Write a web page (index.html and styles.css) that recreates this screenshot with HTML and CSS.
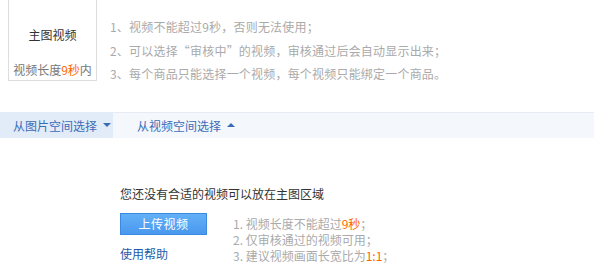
FILE: index.html
```html
<!DOCTYPE html>
<html lang="zh">
<head>
<meta charset="utf-8">
<link rel="stylesheet" href="styles.css">
</head>
<body>
<div class="top">
  <div class="cover">
    <div class="cover-title">主图视频</div>
    <div class="cover-note">视频长度<span class="hl">9秒</span>内</div>
  </div>
  <ul class="rules">
    <li>1、视频不能超过9秒，否则无法使用；</li>
    <li>2、可以选择“审核中”的视频，审核通过后会自动显示出来；</li>
    <li>3、每个商品只能选择一个视频，每个视频只能绑定一个商品。</li>
  </ul>
</div>
<div class="tabs">
  <div class="tab active">从图片空间选择<span class="caret down"></span></div>
  <div class="tab">从视频空间选择<span class="caret up"></span></div>
</div>
<div class="empty">
  <div class="empty-title">您还没有合适的视频可以放在主图区域</div>
  <div class="empty-row">
    <div class="actions">
      <button class="upload">上传视频</button>
      <a class="help">使用帮助</a>
    </div>
    <ol class="tips">
      <li>1. 视频长度不能超过<span class="hl">9秒</span>；</li>
      <li>2. 仅审核通过的视频可用；</li>
      <li>3. 建议视频画面长宽比为<span class="hl">1:1</span>；</li>
    </ol>
  </div>
</div>
</body>
</html>
```
FILE: styles.css
```css
* { box-sizing: border-box; }
html, body { margin: 0; padding: 0; background: #fff; }
body {
  font-family: "Noto Sans CJK SC", "Noto Sans", sans-serif;
  font-size: 12px;
  color: #333;
  width: 594px;
  height: 274px;
  overflow: hidden;
}
.hl { color: #f60; }
.top { display: flex; align-items: flex-start; }
.cover {
  margin-left: 8px;
  margin-top: -1px;
  width: 89px;
  height: 82px;
  border: 1px solid #ddd;
  display: flex;
  flex-direction: column;
  align-items: center;
}
.cover-title {
  margin-top: 26px;
  line-height: 18px;
  font-size: 12px;
  color: #333;
}
.cover-note {
  margin-top: auto;
  margin-bottom: 1px;
  line-height: 18px;
  color: #777;
}
.rules {
  list-style: none;
  margin: 15px 0 0 13px;
  padding: 0;
  color: #aaa;
  line-height: 23.5px;
  letter-spacing: 0.2px;
}
.tabs {
  margin-top: 26px;
  display: flex;
  height: 26px;
  background: #f4f7fc;
  border-top: 1px solid #e6ecf5;
}
.tab {
  display: flex;
  align-items: center;
  color: #3b6cb8;
  line-height: 25px;
}
.tab.active {
  width: 113px;
  padding-left: 13px;
  background: #e2ebf8;
}
.tab + .tab { padding-left: 24px; }
.caret {
  display: inline-block;
  width: 0; height: 0;
  margin-left: 6px;
  border-left: 4px solid transparent;
  border-right: 4px solid transparent;
}
.caret.down { border-top: 4px solid #3b6cb8; }
.caret.up { border-bottom: 4px solid #3b6cb8; margin-top: -1px; }
.empty { padding-left: 120px; margin-top: 47px; }
.empty-title { line-height: 18px; color: #333; }
.empty-row { display: flex; margin-top: 10px; }
.actions { display: flex; flex-direction: column; width: 113px; }
.upload {
  width: 87px;
  height: 22px;
  padding: 0;
  border: 1px solid #3a8ae0;
  background: linear-gradient(#64b0f7, #4898ee);
  color: #fff;
  font-family: inherit;
  font-size: 12px;
  line-height: 20px;
  letter-spacing: 0.5px;
}
.help {
  margin-top: 10px;
  color: #1d5ba8;
  line-height: 18px;
}
.tips {
  list-style: none;
  margin: 3px 0 0 0;
  padding: 0;
  color: #aaa;
  line-height: 16px;
}
```
